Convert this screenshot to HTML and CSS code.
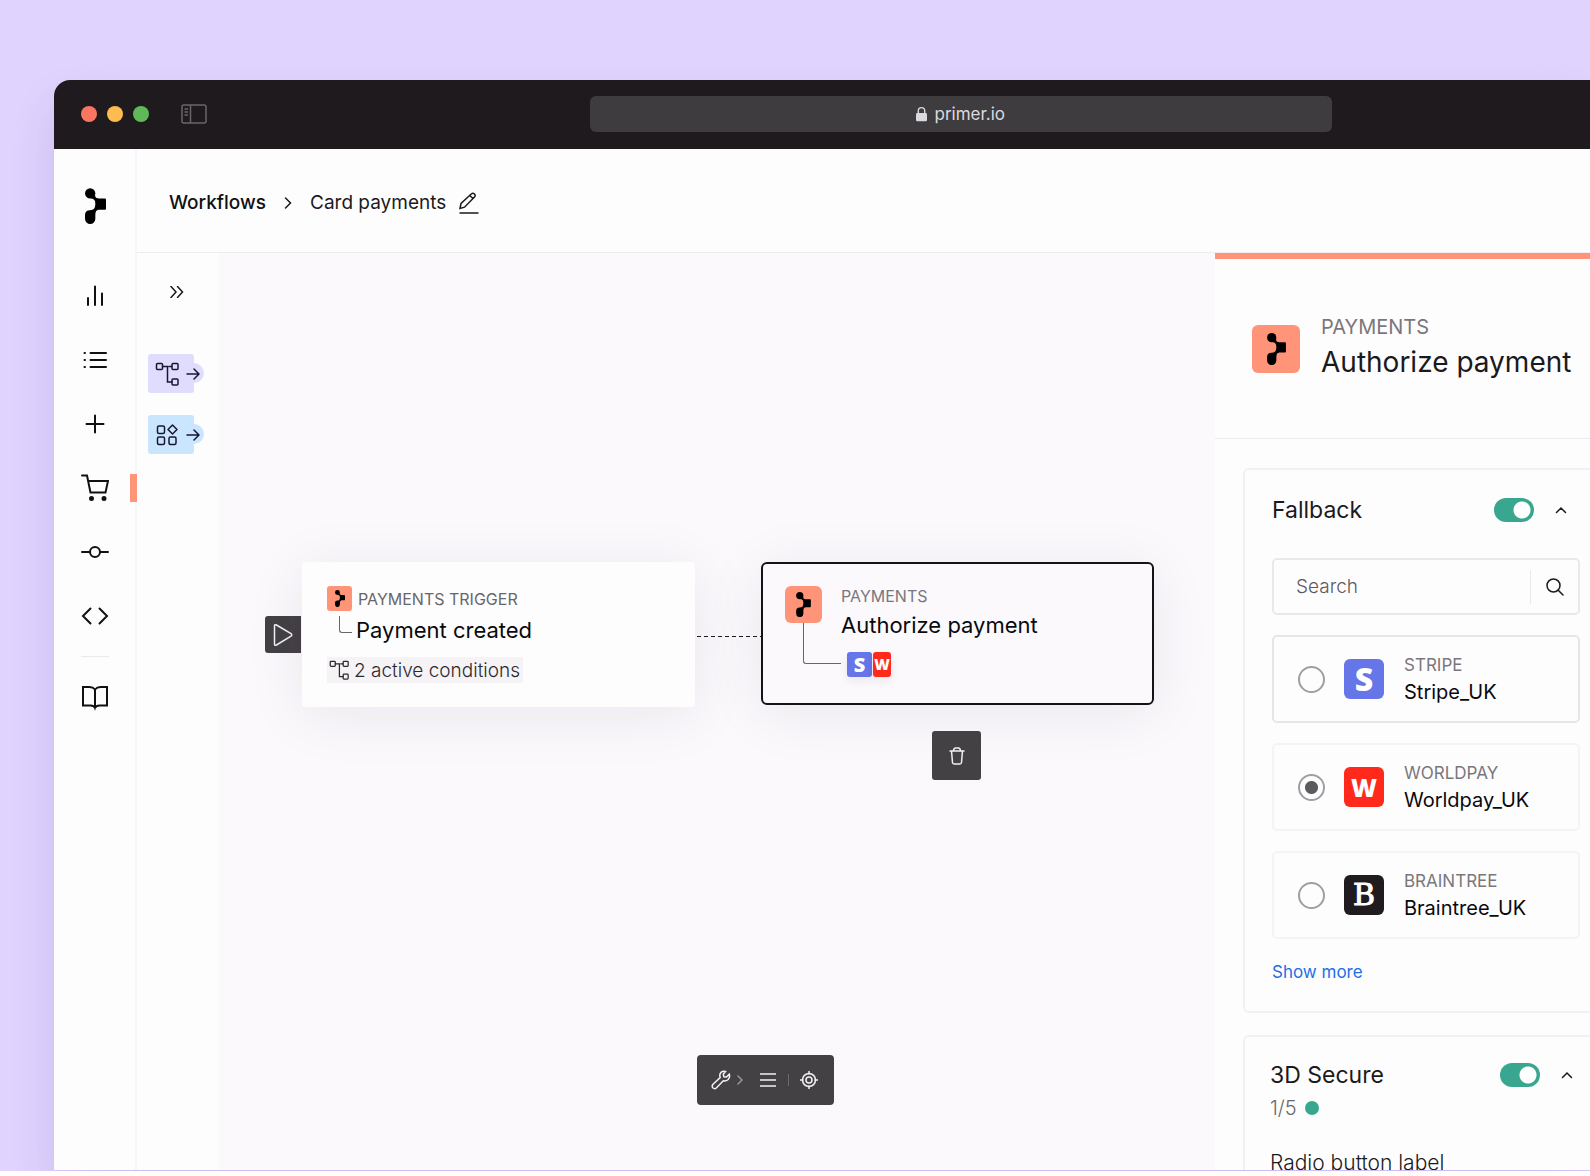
FILE: index.html
```html
<!DOCTYPE html>
<html lang="en">
<head>
	<meta charset="UTF-8">
	<meta name="viewport" content="width=device-width, initial-scale=1">
	<title>Card payments - Workflows</title>
	<link rel="stylesheet" href="styles.css">
</head>
<body>
	<!-- shared shapes -->
	<svg class="defs" aria-hidden="true">
		<symbol id="logo" viewBox="0 0 63 107">
			<circle cx="15.5" cy="15.5" r="15.5"/>
			<rect x="31" y="31" width="32" height="34" rx="3"/>
			<path d="M30 20Q30 31 40 31L33 48Q31 31 17 30Z"/>
			<path d="M0 81Q0 66 15 66Q31 66 31 50L40 65Q31 66 31 80V92A15.500 15.500 0 0 1 0 92Z"/>
		</symbol>
		<symbol id="tree" viewBox="0 0 24 24">
			<rect x="1.500" y="1.500" width="6" height="6" rx="1"/>
			<rect x="17" y="1.500" width="6" height="6" rx="1"/>
			<rect x="17" y="17" width="6" height="6" rx="1"/>
			<path d="M7.500 4.500H12.500V20H17M14 4.500H17"/>
		</symbol>
		<symbol id="arrow" viewBox="0 0 14 12">
			<path d="M1 6H13M8 1L13 6L8 11"/>
		</symbol>
		<symbol id="up" viewBox="0 0 12 8">
			<path d="M1.500 6.500L6 2L10.500 6.500"/>
		</symbol>
	</svg>

	<div class="browser">
		<div class="titlebar">
			<div class="lights">
				<i class="red"></i>
				<i class="yellow"></i>
				<i class="green"></i>
				<svg class="split" width="26" height="20" viewBox="0 0 26 20"><rect x="1" y="1" width="24" height="18" rx="2"/><path d="M9.500 1V19M3.500 5H7M3.500 8H7M3.500 11H7"/></svg>
			</div>
			<div class="address">
				<svg width="11" height="16" viewBox="0 0 12 16"><rect x="0" y="7" width="12" height="9" rx="1.500" fill="#dcd9de"/><path d="M2.500 8V4.500a3.500 3.500 0 0 1 7 0V8" fill="none" stroke="#dcd9de" stroke-width="1.500"/></svg>
				<span>primer.io</span>
			</div>
		</div>

		<div class="app">
			<nav class="rail">
				<a class="brand" href="#" aria-label="Primer"><svg width="21" height="36"><use href="#logo"/></svg></a>
				<a href="#" aria-label="Insights"><svg width="28" height="28" viewBox="0 0 28 28"><path d="M7 16V23M14 4.500V23M21 11.500V23"/></svg></a>
				<a href="#" aria-label="Payments"><svg width="28" height="28" viewBox="0 0 28 28"><path d="M9.500 7H25M9.500 14H25M9.500 21H25M3.500 7H4M3.500 14H4M3.500 21H4"/></svg></a>
				<a href="#" aria-label="Add"><svg width="28" height="28" viewBox="0 0 28 28"><path d="M14 5.500V22.500M5.500 14H22.500"/></svg></a>
				<a class="cur" href="#" aria-label="Checkout"><svg width="28" height="28" viewBox="0 0 28 28"><path d="M1 1.500H6L9.500 18.500H24.500L27 7H7.500"/><circle cx="10.500" cy="24.500" r="1.500" fill="#111"/><circle cx="23" cy="24.500" r="1.500" fill="#111"/></svg></a>
				<a href="#" aria-label="Workflows"><svg width="28" height="28" viewBox="0 0 28 28"><circle cx="14" cy="14" r="5"/><path d="M1 14H9M19 14H27"/></svg></a>
				<a href="#" aria-label="Developers"><svg width="28" height="28" viewBox="0 0 28 28"><path d="M9.500 6.500L2 14L9.500 21.500M18.500 6.500L26 14L18.500 21.500"/></svg></a>
				<hr>
				<a href="#" aria-label="Docs"><svg width="28" height="28" viewBox="0 0 28 28"><path d="M14 6.500Q12 4 8.500 4H2V22.500H9.500Q13 22.500 14 25Q15 22.500 18.500 22.500H26V4H19.500Q16 4 14 6.500V25"/></svg></a>
			</nav>

			<div class="main">
				<header class="crumbs">
					<a href="#">Workflows</a>
					<svg width="8" height="12" viewBox="0 0 8 12"><path d="M1.500 1L6.500 6L1.500 11"/></svg>
					<span>Card payments</span>
					<button class="plain" aria-label="Rename"><svg width="20" height="22" viewBox="0 0 20 22"><path d="M1 16.500L2 11.500L12.500 1.800Q14 .8 15.500 2Q16.800 3.500 15.500 5L5.500 15.200ZM10.800 3.500L14 6.500M1 21H19"/></svg></button>
				</header>

				<div class="work">
					<aside class="palette">
						<button class="plain expand" aria-label="Expand"><svg width="14" height="12" viewBox="0 0 14 12"><path d="M1 .500L6 6L1 11.500M7.500 .500L12.500 6L7.500 11.500"/></svg></button>
						<button class="piece" aria-label="Conditions">
							<svg width="24" height="24"><use href="#tree"/></svg>
							<svg class="go" width="14" height="12"><use href="#arrow"/></svg>
						</button>
						<button class="piece blue" aria-label="Apps">
							<svg width="24" height="24" viewBox="0 0 24 24"><rect x="2.500" y="3" width="7" height="7.500" rx="1.500"/><rect x="2.500" y="14" width="7" height="7.500" rx="1.500"/><rect x="14" y="14" width="7" height="7.500" rx="1.500"/><path d="M17.500 2L22 6.500L17.500 11L13 6.500Z" stroke-linejoin="round"/></svg>
							<svg class="go" width="14" height="12"><use href="#arrow"/></svg>
						</button>
					</aside>

					<section class="canvas">
						<button class="dark play" aria-label="Run"><svg width="20" height="24" viewBox="0 0 20 24"><path d="M1.500 3Q1.500 1 3.500 2L18 10.500Q19.500 12 18 13.200L3.500 22Q1.500 23 1.500 21Z"/></svg></button>
						<div class="node trigger">
							<div class="kind"><span class="tile small"><svg width="10" height="17"><use href="#logo"/></svg></span>PAYMENTS TRIGGER</div>
							<div class="name"><i class="elbow"></i>Payment created</div>
							<div class="conditions"><svg width="20" height="20"><use href="#tree"/></svg>2 active conditions</div>
						</div>
						<i class="wire"></i>
						<div class="node picked">
							<div class="stem">
								<span class="tile medium"><svg width="15" height="25"><use href="#logo"/></svg></span>
								<i class="elbow"></i>
							</div>
							<div>
								<div class="kind">PAYMENTS</div>
								<div class="name">Authorize payment</div>
								<div class="procs"><b class="proc stripe">S</b><b class="proc worldpay">W</b></div>
							</div>
						</div>
						<button class="dark trash" aria-label="Delete"><svg width="16" height="18" viewBox="0 0 16 18"><path d="M1 4H15M2.500 4L3.500 15.500Q3.700 17 5 17H11Q12.300 17 12.500 15.500L13.500 4M4.500 3.500Q5 1 6.500 1H9.500Q11 1 11.500 3.500"/></svg></button>
						<div class="tools">
							<button class="plain" aria-label="Tools"><svg width="20" height="20" viewBox="0 0 20 20"><path d="M14.500 1.500Q10.500 .500 9 4Q8.500 6 9.200 7.500L1.800 14.500Q.500 16.500 2 18Q3.800 19.300 5.300 18L12.300 10.800Q15 11.500 17.200 9.500Q19.300 7 18.300 4.200L15.500 7L12.800 6.800L12.300 4.200Z"/></svg><svg class="dim" width="6" height="10" viewBox="0 0 6 10"><path d="M1 1L5 5L1 9"/></svg></button>
							<button class="plain" aria-label="List"><svg width="16" height="16" viewBox="0 0 16 16"><path d="M0 2H16M0 8H16M0 14H16"/></svg></button>
							<i class="bar"></i>
							<button class="plain" aria-label="Center"><svg width="18" height="18" viewBox="0 0 18 18"><circle cx="9" cy="9" r="6.500"/><circle cx="9" cy="9" r="3"/><path d="M9 0V3M9 15V18M0 9H3M15 9H18"/></svg></button>
						</div>
					</section>

					<aside class="panel">
						<div class="panel_head">
							<span class="tile large"><svg width="19" height="32"><use href="#logo"/></svg></span>
							<div>
								<p>PAYMENTS</p>
								<h1>Authorize payment</h1>
							</div>
						</div>

						<div class="card">
							<div class="card_head">
								<h2><label for="fallback">Fallback</label></h2>
								<input class="toggle" type="checkbox" id="fallback" checked>
								<button class="plain" aria-label="Collapse fallback"><svg width="12" height="8"><use href="#up"/></svg></button>
							</div>
							<div class="search">
								<input type="text" placeholder="Search" aria-label="Search">
								<button class="plain" aria-label="Find"><svg width="18" height="18" viewBox="0 0 18 18"><circle cx="7.500" cy="7.500" r="6.500"/><path d="M12 12L17 17"/></svg></button>
							</div>
							<label class="option strong">
								<input type="radio" name="processor">
								<b class="proc stripe">S</b>
								<span><small>STRIPE</small>Stripe_UK</span>
							</label>
							<label class="option">
								<input type="radio" name="processor" checked>
								<b class="proc worldpay">W</b>
								<span><small>WORLDPAY</small>Worldpay_UK</span>
							</label>
							<label class="option">
								<input type="radio" name="processor">
								<b class="proc braintree">B</b>
								<span><small>BRAINTREE</small>Braintree_UK</span>
							</label>
							<a class="more" href="#">Show more</a>
						</div>

						<div class="card wide">
							<div class="card_head">
								<h2><label for="secure">3D Secure</label></h2>
								<input class="toggle" type="checkbox" id="secure" checked>
								<button class="plain" aria-label="Collapse 3D Secure"><svg width="12" height="8"><use href="#up"/></svg></button>
							</div>
							<div class="count">1/5 <i></i></div>
							<p class="field">Radio button label</p>
						</div>
					</aside>
				</div>
			</div>
		</div>
	</div>
</body>
</html>
```
FILE: styles.css
```css
*{
	margin: 0;
	padding: 0;
	box-sizing: border-box;
}
html{
	height: 100%;
	padding-bottom: 5px;
	background: #fefdfe;
}
body{
	height: 100%;
	padding: 80px 0 1px 54px;
	overflow: hidden;
	background: #e0d3fe;
	color: #1a1a1c;
	font-family: Inter, "Liberation Sans", sans-serif;
	font-size: 20px;
}
a{
	color: inherit;
	text-decoration: none;
}
button, input{
	font: inherit;
	color: inherit;
}
svg{
	display: block;
	flex: none;
}
.defs{
	position: absolute;
	width: 0;
	height: 0;
}
.plain{
	display: flex;
	align-items: center;
	justify-content: center;
	border: 0;
	background: none;
	cursor: pointer;
}
.plain svg, .crumbs svg, .rail a svg, .piece svg, .dark svg, .conditions svg{
	fill: none;
	stroke: currentColor;
	stroke-width: 1.500;
	stroke-linecap: round;
}

/* browser window */
.browser{
	display: flex;
	flex-direction: column;
	height: 100%;
	border-radius: 16px 0 0 0;
	background: #fefdfe;
	box-shadow: 0 24px 44px rgba(80,50,150,.14);
}
.titlebar{
	display: flex;
	align-items: center;
	flex: none;
	height: 69px;
	padding: 0 0 2px 27px;
	border-radius: 16px 0 0 0;
	background: #1f1a1d;
}
.lights{
	display: flex;
	align-items: center;
	gap: 10px;
	width: 33.700%;
}
.lights i{
	width: 16px;
	height: 16px;
	border-radius: 50%;
}
.red{ background: #fb7660; }
.yellow{ background: #fdbc4f; }
.green{ background: #5fb957; }
.split{
	margin-left: 22px;
	fill: none;
	stroke: #6a666a;
	stroke-width: 1.500;
}
.address{
	display: flex;
	align-items: center;
	justify-content: center;
	gap: 7px;
	width: 49.200%;
	height: 36px;
	border-radius: 6px;
	background: #3f3c40;
	color: #dcd9de;
	font-size: 17px;
}

/* left rail */
.app{
	display: flex;
	flex: 1;
	min-height: 0;
}
.rail{
	display: flex;
	flex-direction: column;
	flex: none;
	width: 83px;
	padding-left: 1px;
	border-right: 2px solid #f8f5fa;
	color: #111;
}
.rail a{
	display: flex;
	align-items: center;
	justify-content: center;
	height: 64px;
	position: relative;
}
.rail a svg{
	stroke-width: 2;
}
.rail .brand{
	height: 36px;
	margin: 39px 0 40px;
}
.rail .brand svg{
	fill: #000;
	stroke: none;
}
.rail .cur:after{
	content: "";
	position: absolute;
	right: -2px;
	top: 18px;
	width: 7px;
	height: 28px;
	background: #ff9478;
}
.rail hr{
	width: 28px;
	margin: 8px auto;
	border: 0;
	border-top: 1px solid #ebe9ec;
}

/* header */
.main{
	display: flex;
	flex-direction: column;
	flex: 1;
	min-width: 0;
}
.crumbs{
	display: flex;
	align-items: center;
	flex: none;
	height: 104px;
	padding: 4px 0 0 32px;
	border-bottom: 1px solid #efecf1;
	font-size: 19px;
}
.crumbs a{
	color: #111;
	font-weight: 500;
}
.crumbs > svg{
	margin: 0 18px;
}
.crumbs .plain{
	margin-left: 13px;
}

/* tool column */
.work{
	display: flex;
	flex: 1;
	min-height: 0;
}
.palette{
	flex: none;
	width: 81px;
	padding: 29px 0 0 11px;
}
.expand{
	width: 58px;
	height: 20px;
	margin-bottom: 52px;
}
.piece{
	display: flex;
	align-items: center;
	gap: 7px;
	position: relative;
	width: 46px;
	height: 39px;
	padding-left: 7px;
	margin-bottom: 22px;
	border: 0;
	border-radius: 3px;
	background: #e0dcfe;
	color: #1b1630;
}
.piece:before{
	content: "";
	position: absolute;
	right: -10px;
	top: 9px;
	width: 20px;
	height: 20px;
	border-radius: 50%;
	background: inherit;
}
.piece svg{
	position: relative;
}
.piece.blue{
	background: #c9e6fe;
}

/* canvas, nodes are placed freely */
.canvas{
	flex: 1;
	position: relative;
	overflow: hidden;
	background: #fbf9fc;
}
.node{
	position: absolute;
	top: 309px;
	width: 393px;
	border-radius: 4px;
	box-shadow: 0 8px 60px rgba(40,30,50,.08);
}
.trigger{
	left: 84px;
	height: 145px;
	padding: 24px 25px;
	background: #fefdfe;
}
.kind{
	display: flex;
	align-items: center;
	gap: 6px;
	color: #69666b;
	font-size: 16px;
}
.name{
	color: #0a0a0c;
	font-size: 22px;
	line-height: 28px;
}
.trigger .name{
	display: flex;
	margin-top: 5px;
	gap: 4px;
}
.tile{
	display: flex;
	align-items: center;
	justify-content: center;
	flex: none;
	border-radius: 6px;
	background: #ff9478;
}
.small{
	width: 25px;
	height: 25px;
	border-radius: 3px;
}
.medium{
	width: 37px;
	height: 37px;
}
.large{
	width: 48px;
	height: 48px;
}
.elbow{
	flex: none;
	width: 13px;
	height: 17px;
	margin-left: 12px;
	border: 1px solid #69666b;
	border-width: 0 0 1px 1px;
	border-radius: 0 0 0 3px;
}
.conditions{
	display: inline-flex;
	align-items: center;
	gap: 5px;
	height: 26px;
	margin-top: 13px;
	padding: 0 3px 0 2px;
	background: #f5f3f6;
	color: #2c292e;
	font-size: 19px;
	font-weight: 300;
}
.wire{
	position: absolute;
	left: 479px;
	top: 383px;
	width: 64px;
	height: 1px;
	background: repeating-linear-gradient(90deg, #1f1b20 0 4px, transparent 4px 7px);
}
.picked{
	display: flex;
	gap: 18px;
	left: 543px;
	height: 143px;
	padding: 22px;
	border: 2px solid #151316;
	border-radius: 6px;
	background: #fbf9fc;
}
.stem .elbow{
	display: block;
	width: 38px;
	height: 41px;
	margin-left: 18px;
	margin-right: -18px;
}
.picked .kind{
	height: 20px;
	color: #7a777c;
}
.picked .name{
	margin-top: 5px;
}
.procs{
	display: flex;
	gap: 1px;
	margin: 13px 0 0 6px;
}
.proc{
	display: flex;
	align-items: center;
	justify-content: center;
	flex: none;
	width: 40px;
	height: 40px;
	border-radius: 6px;
	color: #fff;
	font-family: "Open Sans", sans-serif;
	font-size: 32px;
	font-weight: 800;
	line-height: 1;
}
.stripe{ background: #6675e8; }
.worldpay{ background: #ff2a1c; font-size: 25px; }
.braintree{
	background: #1f1b1e;
	font-family: "DejaVu Serif", serif;
	font-size: 30px;
	font-weight: 400;
	-webkit-text-stroke: 1px #fff;
}
.procs .proc{
	width: 25px;
	height: 25px;
	border-radius: 3px;
	font-size: 20px;
	box-shadow: 0 4px 10px rgba(60,30,60,.08);
}
.procs .worldpay{
	width: 18px;
	font-size: 15px;
}
.dark{
	display: flex;
	align-items: center;
	justify-content: center;
	position: absolute;
	border: 0;
	border-radius: 3px;
	background: #444145;
	color: #f2f0f3;
}
.play{
	left: 47px;
	top: 363px;
	width: 36px;
	height: 37px;
	border-radius: 3px 0 0 3px;
}
.trash{
	left: 714px;
	top: 478px;
	width: 49px;
	height: 49px;
}
.tools{
	display: flex;
	align-items: center;
	position: absolute;
	left: 479px;
	bottom: 65px;
	height: 50px;
	padding: 0 16px 0 14px;
	border-radius: 4px;
	background: #444145;
	color: #f2f0f3;
}
.tools .plain{
	gap: 6px;
}
.tools .plain:first-child{
	margin-right: 17px;
}
.tools .dim{
	color: #9a979b;
}
.bar{
	width: 1px;
	height: 12px;
	margin: 0 11px 0 12px;
	background: #6b686c;
}

/* settings panel, runs past the right edge */
.panel{
	flex: none;
	width: 375px;
	border-top: 6px solid #ff9478;
	overflow: hidden;
}
.panel_head{
	display: flex;
	align-items: center;
	gap: 21px;
	height: 180px;
	padding-left: 37px;
	border-bottom: 1px solid #efecf1;
	white-space: nowrap;
}
.panel_head p{
	margin-top: 2px;
	color: #7a777c;
	line-height: 24px;
}
.panel_head h1{
	font-size: 28px;
	font-weight: 400;
	line-height: 46px;
}
.card{
	margin: 29px 0 0 28px;
	padding: 20px 10px 27px 27px;
	border: 2px solid #f3f0f5;
	border-right: 0;
	border-radius: 6px 0 0 6px;
}
.card + .card{
	margin-top: 22px;
}
.card.wide{
	padding: 18px 4px 0 25px;
}
.card_head{
	display: flex;
	align-items: center;
	height: 40px;
}
.card_head h2{
	flex: 1;
	font-size: 23px;
	font-weight: 400;
}
.card_head .plain{
	width: 38px;
	height: 38px;
	margin-left: 8px;
}
.toggle{
	appearance: none;
	width: 40px;
	height: 24px;
	border-radius: 12px;
	background: radial-gradient(circle at 28px 12px, #fff 8px, transparent 9px) #39a78f;
}
.search{
	display: flex;
	align-items: center;
	height: 57px;
	margin-top: 28px;
	border: 2px solid #ebe8ed;
	border-radius: 5px;
}
.search input{
	flex: 1;
	min-width: 0;
	height: 34px;
	padding-left: 22px;
	border: 0;
	border-right: 1px solid #ebe8ed;
	outline: 0;
	background: none;
	font-size: 19px;
	font-weight: 300;
}
.search input::placeholder{
	color: #5c595e;
}
.search .plain{
	width: 47px;
	height: 34px;
}
.option{
	display: flex;
	align-items: center;
	height: 88px;
	margin-top: 20px;
	padding-left: 24px;
	border: 2px solid #f5f3f6;
	border-radius: 5px;
	color: #0a0a0c;
	line-height: 27px;
}
.option.strong{
	border-color: #e8e5ea;
}
.option input{
	appearance: none;
	flex: none;
	width: 27px;
	height: 27px;
	margin-right: 19px;
	border: 2px solid #a19ea3;
	border-radius: 50%;
}
.option input:checked{
	background: radial-gradient(circle, #5e5b60 6px, transparent 7px);
}
.option .proc{
	margin-right: 20px;
}
.option small{
	display: block;
	color: #7a777c;
	font-size: 17px;
}
.more{
	display: block;
	margin-top: 21px;
	color: #1f6fe6;
	font-size: 17px;
	line-height: 24px;
}
.count{
	display: flex;
	align-items: center;
	gap: 8px;
	height: 26px;
	color: #6b686d;
	font-weight: 300;
}
.count i{
	width: 14px;
	height: 14px;
	border-radius: 50%;
	background: #39a78f;
}
.field{
	margin-top: 30px;
	font-size: 21px;
	font-weight: 300;
	line-height: 24px;
}
```
